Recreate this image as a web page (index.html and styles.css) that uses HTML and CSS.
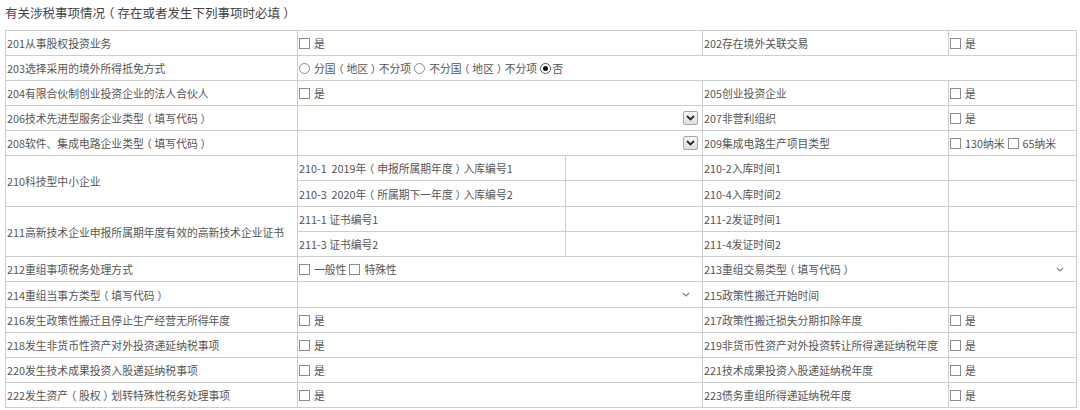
FILE: index.html
```html
<!DOCTYPE html>
<html lang="zh-CN">
<head>
<meta charset="utf-8">
<title>有关涉税事项情况</title>
<link rel="stylesheet" href="styles.css">
</head>
<body>
<div class="title">有关涉税事项情况<span class="p">（</span>存在或者发生下列事项时必填<span class="p">）</span></div>
<table class="grid">
  <colgroup>
    <col class="c1"><col class="c2a"><col class="c2b"><col class="c3"><col class="c4">
  </colgroup>
  <tr>
    <td>201从事股权投资业务</td>
    <td colspan="2"><span class="cb"></span><span class="lbl">是</span></td>
    <td>202存在境外关联交易</td>
    <td><span class="cb"></span><span class="lbl">是</span></td>
  </tr>
  <tr>
    <td>203选择采用的境外所得抵免方式</td>
    <td colspan="4"><span class="rd"></span><span class="lbl">分国<span class="p">（</span>地区<span class="p">）</span>不分项</span><span class="rd"></span><span class="lbl">不分国<span class="p">（</span>地区<span class="p">）</span>不分项</span><span class="rd on"></span><span class="lbl tight">否</span></td>
  </tr>
  <tr>
    <td>204有限合伙制创业投资企业的法人合伙人</td>
    <td colspan="2"><span class="cb"></span><span class="lbl">是</span></td>
    <td>205创业投资企业</td>
    <td><span class="cb"></span><span class="lbl">是</span></td>
  </tr>
  <tr>
    <td>206技术先进型服务企业类型<span class="p">（</span>填写代码<span class="p">）</span></td>
    <td colspan="2" class="selcell"><div class="sel"><span class="btn"><svg width="9" height="6" viewBox="0 0 9 6"><polyline points="1,1 4.5,4.5 8,1" fill="none" stroke="#2a2a2a" stroke-width="1.8"/></svg></span></div></td>
    <td>207非营利组织</td>
    <td><span class="cb"></span><span class="lbl">是</span></td>
  </tr>
  <tr>
    <td>208软件、集成电路企业类型<span class="p">（</span>填写代码<span class="p">）</span></td>
    <td colspan="2" class="selcell"><div class="sel"><span class="btn"><svg width="9" height="6" viewBox="0 0 9 6"><polyline points="1,1 4.5,4.5 8,1" fill="none" stroke="#2a2a2a" stroke-width="1.8"/></svg></span></div></td>
    <td>209集成电路生产项目类型</td>
    <td><span class="cb"></span><span class="lbl">130纳米</span><span class="cb"></span><span class="lbl">65纳米</span></td>
  </tr>
  <tr>
    <td rowspan="2">210科技型中小企业</td>
    <td>210-1&nbsp; 2019年<span class="p">（</span>申报所属期年度<span class="p">）</span>入库编号1</td>
    <td></td>
    <td>210-2入库时间1</td>
    <td></td>
  </tr>
  <tr class="tall">
    <td>210-3&nbsp; 2020年<span class="p">（</span>所属期下一年度<span class="p">）</span>入库编号2</td>
    <td></td>
    <td>210-4入库时间2</td>
    <td></td>
  </tr>
  <tr>
    <td rowspan="2">211高新技术企业申报所属期年度有效的高新技术企业证书</td>
    <td>211-1 证书编号1</td>
    <td></td>
    <td>211-2发证时间1</td>
    <td></td>
  </tr>
  <tr>
    <td>211-3 证书编号2</td>
    <td></td>
    <td>211-4发证时间2</td>
    <td></td>
  </tr>
  <tr>
    <td>212重组事项税务处理方式</td>
    <td colspan="2"><span class="cb"></span><span class="lbl">一般性</span><span class="cb"></span><span class="lbl">特殊性</span></td>
    <td>213重组交易类型<span class="p">（</span>填写代码<span class="p">）</span></td>
    <td class="selcell"><div class="sel thin"><svg width="8" height="5" viewBox="0 0 8 5"><polyline points="0.8,0.8 4,4 7.2,0.8" fill="none" stroke="#777" stroke-width="1.1"/></svg></div></td>
  </tr>
  <tr class="tall">
    <td>214重组当事方类型<span class="p">（</span>填写代码<span class="p">）</span></td>
    <td colspan="2" class="selcell"><div class="sel thin"><svg width="8" height="5" viewBox="0 0 8 5"><polyline points="0.8,0.8 4,4 7.2,0.8" fill="none" stroke="#777" stroke-width="1.1"/></svg></div></td>
    <td>215政策性搬迁开始时间</td>
    <td></td>
  </tr>
  <tr>
    <td>216发生政策性搬迁且停止生产经营无所得年度</td>
    <td colspan="2"><span class="cb"></span><span class="lbl">是</span></td>
    <td>217政策性搬迁损失分期扣除年度</td>
    <td><span class="cb"></span><span class="lbl">是</span></td>
  </tr>
  <tr>
    <td>218发生非货币性资产对外投资递延纳税事项</td>
    <td colspan="2"><span class="cb"></span><span class="lbl">是</span></td>
    <td>219非货币性资产对外投资转让所得递延纳税年度</td>
    <td><span class="cb"></span><span class="lbl">是</span></td>
  </tr>
  <tr>
    <td>220发生技术成果投资入股递延纳税事项</td>
    <td colspan="2"><span class="cb"></span><span class="lbl">是</span></td>
    <td>221技术成果投资入股递延纳税年度</td>
    <td><span class="cb"></span><span class="lbl">是</span></td>
  </tr>
  <tr>
    <td>222发生资产<span class="p">（</span>股权<span class="p">）</span>划转特殊性税务处理事项</td>
    <td colspan="2"><span class="cb"></span><span class="lbl">是</span></td>
    <td>223债务重组所得递延纳税年度</td>
    <td><span class="cb"></span><span class="lbl">是</span></td>
  </tr>
</table>
</body>
</html>
```

FILE: styles.css
```css
html, body {
  margin: 0;
  padding: 0;
  background: #ffffff;
}

body {
  font-family: "Noto Sans CJK SC", "Noto Sans", sans-serif;
  color: #555555;
}

.title {
  height: 30px;
  line-height: 25px;
  padding-left: 5px;
  font-size: 12.5px;
  color: #444444;
}

.p {
  display: inline-block;
  width: 1em;
  text-align: center;
  font-feature-settings: "halt";
}

.grid {
  margin-left: 5px;
  border-collapse: collapse;
  table-layout: fixed;
  width: 1072px;
  font-size: 10.8px;
}

.c1 { width: 292px; }
.c2a { width: 268px; }
.c2b { width: 137px; }
.c3 { width: 246px; }
.c4 { width: 128px; }

.grid tr {
  height: 25px;
}

.grid tr.tall {
  height: 26px;
}

.grid td {
  border: 1px solid #cdcdcd;
  padding: 0 0 0 1px;
  vertical-align: middle;
  white-space: nowrap;
  overflow: hidden;
  line-height: 14px;
}

.cb {
  display: inline-block;
  width: 9px;
  height: 9px;
  border: 1px solid #8c8c8c;
  background: #ffffff;
  vertical-align: -1px;
}

.rd {
  display: inline-block;
  position: relative;
  width: 9px;
  height: 9px;
  border: 1px solid #8c8c8c;
  border-radius: 50%;
  background: #ffffff;
  vertical-align: -1px;
}

.rd.on {
  border-color: #555555;
}

.rd.on::after {
  content: "";
  position: absolute;
  left: 2px;
  top: 2px;
  width: 5px;
  height: 5px;
  border-radius: 50%;
  background: #111111;
}

.lbl {
  margin: 0 3px 0 4px;
}

.lbl.tight {
  margin-left: 1px;
}

.selcell {
  padding: 0;
}

.sel {
  display: flex;
  justify-content: flex-end;
  align-items: center;
  padding-right: 4px;
}

.sel.thin {
  padding-right: 12px;
}

.btn {
  display: flex;
  align-items: center;
  justify-content: center;
  width: 13px;
  height: 12px;
  border: 1px solid #a6a6a6;
  border-radius: 2px;
  background: linear-gradient(#f7f7f7, #dedede);
}
```
